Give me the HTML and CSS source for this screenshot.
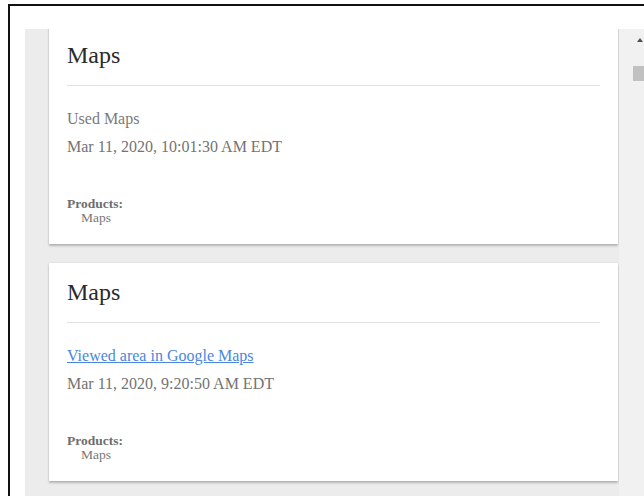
FILE: index.html
```html
<!DOCTYPE html>
<html lang="en">
<head>
<meta charset="utf-8">
<title>My Activity – Maps</title>
<link rel="stylesheet" href="styles.css">
</head>
<body>
<div class="frame">
  <div class="panel">
    <div class="feed">
      <div class="feed-inner">
        <section class="card">
          <header class="card-head">Maps</header>
          <div class="card-body">
            <div class="activity">Used Maps</div>
            <div class="stamp">Mar 11, 2020, 10:01:30 AM EDT</div>
          </div>
          <div class="products">
            <div class="products-label">Products:</div>
            <div class="products-item">Maps</div>
          </div>
        </section>
        <section class="card">
          <header class="card-head">Maps</header>
          <div class="card-body">
            <div class="activity"><a class="activity-link" href="#">Viewed area in Google Maps</a></div>
            <div class="stamp">Mar 11, 2020, 9:20:50 AM EDT</div>
          </div>
          <div class="products">
            <div class="products-label">Products:</div>
            <div class="products-item">Maps</div>
          </div>
        </section>
      </div>
    </div>
    <div class="scrollbar">
      <div class="scroll-arrow"></div>
      <div class="scroll-thumb"></div>
    </div>
  </div>
</div>
</body>
</html>
```

FILE: styles.css
```css
html, body {
  margin: 0;
  padding: 0;
  background: #ffffff;
  overflow: hidden;
  height: 496px;
}

body {
  font-family: "Liberation Serif", "Times New Roman", serif;
  color: #222222;
}

/* outer window edge */
.frame {
  display: flex;
  flex-direction: column;
  margin: 4px 0 0 8px;
  border-top: 2px solid #111111;
  border-left: 2px solid #111111;
  padding: 23px 0 0 15px;
  height: 492px;
  width: 636px;
  box-sizing: border-box;
}

/* scrolling activity panel */
.panel {
  flex: 1;
  min-height: 0;
  display: flex;
  background: #ececec;
  overflow: hidden;
}

.feed {
  flex: 1;
  min-width: 0;
  overflow: hidden;
  padding: 0 1px 0 24px;
}

.feed-inner {
  margin-top: -3px;
}

.card {
  background: #ffffff;
  padding: 0 18px;
  margin-bottom: 19px;
  box-shadow: 0 2px 2px rgba(0, 0, 0, 0.22), 0 0 2px rgba(0, 0, 0, 0.10);
}

.card-head {
  font-size: 24px;
  line-height: 28px;
  padding: 15px 0 16px;
  border-bottom: 1px solid #e2e2e2;
  color: #2a2a2a;
}

.card-body {
  padding-top: 19px;
  font-size: 16px;
  line-height: 28px;
  color: #777777;
}

.activity {
  color: #7a7a7a;
}

.activity-link {
  color: #4a86e0;
  text-decoration: underline;
}

.stamp {
  color: #737373;
}

.products {
  padding: 36px 0 19px;
  font-size: 13.5px;
  line-height: 14px;
  color: #777777;
}

.products-label {
  font-weight: bold;
  color: #6e6e6e;
}

.products-item {
  padding-left: 14px;
}

/* page scrollbar */
.scrollbar {
  width: 25px;
  flex: none;
  background: #f1f1f1;
}

.scroll-arrow {
  width: 0;
  height: 0;
  margin: 9px 0 0 18px;
  border-left: 3px solid transparent;
  border-right: 3px solid transparent;
  border-bottom: 4px solid #505050;
}

.scroll-thumb {
  margin: 24px 0 0 14px;
  height: 15px;
  background: #c1c1c1;
}
```
